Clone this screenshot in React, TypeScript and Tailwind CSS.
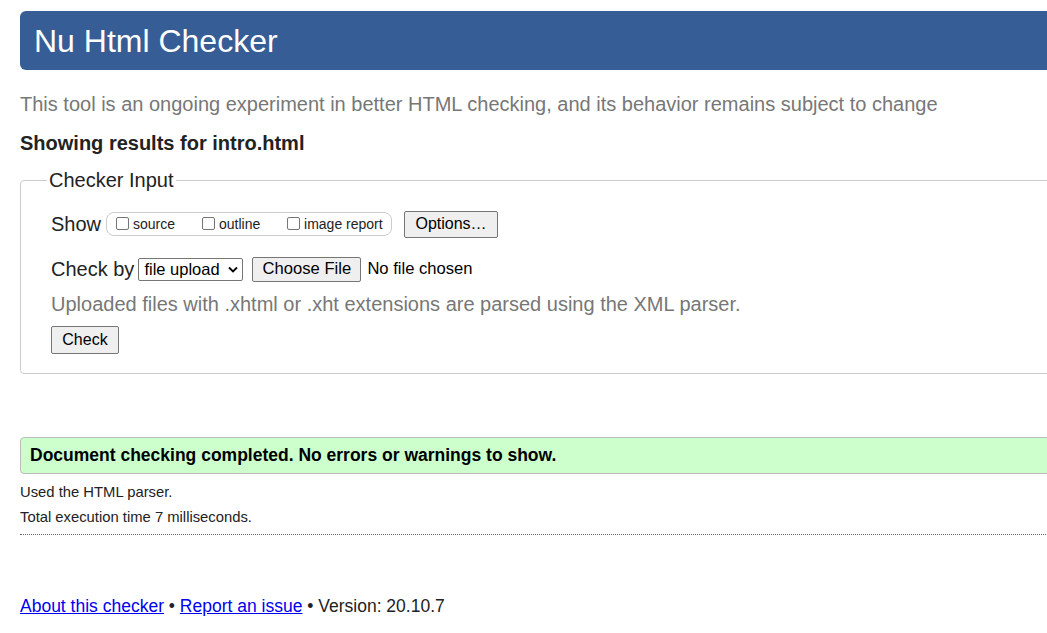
import React from "react";

function Box() {
  return (
    <span className="inline-block w-[13px] h-[13px] border border-[#767676] rounded-[2px] bg-white mr-[4px] mt-[-2px]" />
  );
}

function Btn({ children, className = "" }: { children: React.ReactNode; className?: string }) {
  return (
    <span
      className={
        "inline-flex items-center justify-center border border-[#767676] rounded-[2px] bg-[#efefef] text-black " +
        className
      }
    >
      {children}
    </span>
  );
}

export default function App() {
  return (
    <div className="w-[1047px] h-[633px] overflow-hidden bg-white" style={{ fontFamily: '"Liberation Sans", Arial, sans-serif' }}>
      <div className="w-[1100px] pl-[20px] pt-[11px]">
        <div className="h-[59px] bg-[#365d95] rounded-[6px] flex items-center pl-[14px]">
          <h1 className="text-white text-[32px] leading-none">Nu Html Checker</h1>
        </div>
        <p className="text-[#777] text-[20px] leading-[24px] mt-[22px]">
          This tool is an ongoing experiment in better HTML checking, and its behavior remains subject to change
        </p>
        <p className="text-[#222] font-bold text-[20px] leading-[24px] mt-[15px]">Showing results for intro.html</p>
        <div className="relative mt-[25px] border border-[#ccc] rounded-[4px] h-[194px] pl-[30px] pt-[29px]">
          <span className="absolute left-[26px] top-[-13px] bg-white px-[2px] text-[20px] leading-[24px] text-[#222]">
            Checker Input
          </span>
          <div className="flex items-center h-[28px]">
            <span className="text-[20px] text-[#222] mr-[5px]">Show</span>
            <div className="flex items-center h-[24px] border border-[#ccc] rounded-[8px] w-[286px] pl-[9px] text-[14px] text-[#222]">
              <span className="w-[86px] flex items-center"><Box />source</span>
              <span className="w-[85px] flex items-center"><Box />outline</span>
              <span className="flex items-center"><Box />image report</span>
            </div>
            <Btn className="ml-[12px] h-[27px] w-[94px] text-[16px]">Options…</Btn>
          </div>
          <div className="flex items-center h-[28px] mt-[17px]">
            <span className="text-[20px] text-[#222] mr-[4px]">Check by</span>
            <span className="inline-flex items-center justify-between border border-[#767676] rounded-[2px] h-[23px] w-[105px] pl-[5px] pr-[4px] text-[16.5px] text-black">
              file upload
              <svg width="10" height="7" viewBox="0 0 10 7"><path d="M1 1.5 L5 5.5 L9 1.5" stroke="black" strokeWidth="1.8" fill="none" /></svg>
            </span>
            <Btn className="ml-[9px] h-[25px] w-[109px] text-[16.6px]">Choose File</Btn>
            <span className="ml-[6px] text-[16.6px] text-black">No file chosen</span>
          </div>
          <p className="text-[#777] text-[20px] leading-[24px] mt-[9px]">
            Uploaded files with .xhtml or .xht extensions are parsed using the XML parser.
          </p>
          <Btn className="mt-[10px] h-[28px] w-[68px] text-[16px]">Check</Btn>
        </div>
        <div className="mt-[63px] h-[37px] bg-[#ccffcc] border border-[#bbb] rounded-[4px] flex items-center pl-[9px]">
          <span className="font-bold text-[17.5px] text-black">Document checking completed. No errors or warnings to show.</span>
        </div>
        <p className="text-[14.8px] text-[#222] leading-[18px] mt-[9px]">Used the HTML parser.</p>
        <p className="text-[14.8px] text-[#222] leading-[18px] mt-[7px]">Total execution time 7 milliseconds.</p>
        <div className="mt-[8px] border-t border-dotted border-[#666]" />
        <p className="text-[17.5px] text-[#222] leading-[22px] mt-[60px]">
          <a className="text-[#0000ee] underline" href="#">About this checker</a> •{" "}
          <a className="text-[#0000ee] underline" href="#">Report an issue</a> • Version: 20.10.7
        </p>
      </div>
    </div>
  );
}
